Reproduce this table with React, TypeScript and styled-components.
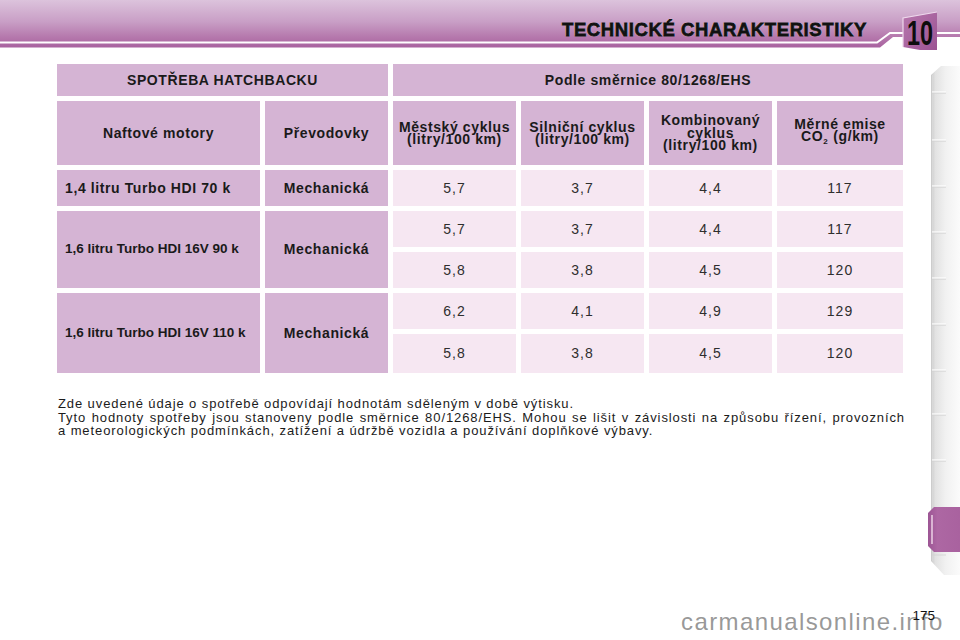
import React from "react";
import styled, { createGlobalStyle } from "styled-components";

const GlobalStyle = createGlobalStyle`
  html, body { margin: 0; padding: 0; background: #ffffff; }
  body { font-family: "Liberation Sans", Arial, sans-serif; color: #1b1b1b; }
`;

const Page = styled.div`
  position: relative;
  width: 960px;
  height: 640px;
  display: flex;
  flex-direction: column;
  overflow: hidden;
`;

const Header = styled.header`
  display: grid;
  height: 50px;
  flex: none;
  & > * { grid-area: 1 / 1; }
`;

const HeaderArt = styled.svg`
  display: block;
`;

const Title = styled.h1`
  margin: 20.5px 0 0 562px;
  align-self: start;
  justify-self: start;
  font-size: 18.5px;
  line-height: 18px;
  font-weight: bold;
  letter-spacing: 0.6px;
  color: #111;
  -webkit-text-stroke: 0.8px #111;
  text-shadow: 0 0 1px #fff, 0 0 1px #fff;
  white-space: nowrap;
`;

const Body = styled.div`
  display: flex;
  height: 525px;
  flex: none;
`;

const Content = styled.main`
  width: 846px;
  padding: 14px 0 0 57px;
  flex: none;
`;

const Table = styled.div`
  display: grid;
  grid-template-columns: 203px 123px 123px 123px 123px 126px;
  grid-template-rows: 32px 64px 36px 36px 36px 36px 39px;
  gap: 5px;
`;

const Cell = styled.div<{
  $tone: "head" | "data";
  $col: string;
  $row: string;
  $left?: boolean;
  $tight?: boolean;
  $bold?: boolean;
}>`
  grid-column: ${(p) => p.$col};
  grid-row: ${(p) => p.$row};
  background: ${(p) => (p.$tone === "head" ? "#d5b4d4" : "#f6e7f2")};
  display: flex;
  align-items: center;
  justify-content: ${(p) => (p.$left ? "flex-start" : "center")};
  text-align: ${(p) => (p.$left ? "left" : "center")};
  padding: 0 ${(p) => (p.$left ? "8px" : "2px")};
  font-size: ${(p) => (p.$tight ? "13.5px" : "14px")};
  letter-spacing: ${(p) => (p.$tight ? "0px" : p.$bold ? "0.6px" : "1px")};
  font-weight: ${(p) => (p.$bold ? "bold" : "normal")};
  line-height: 12.5px;
  color: ${(p) => (p.$bold ? "#1a1a1a" : "#2e2e2e")};
`;

const Label = styled.span`
  display: block;
  white-space: nowrap;
`;

const Sub = styled.span`
  font-size: 8px;
  vertical-align: -3px;
  letter-spacing: 0;
  margin-right: 1px;
`;

const Note = styled.div`
  margin: 24px 0 0 1px;
  width: 847px;
  font-size: 13px;
  line-height: 13.5px;
  letter-spacing: 0.9px;
  color: #1b1b1b;
`;

const NoteLine = styled.div<{ $justify?: boolean }>`
  white-space: nowrap;
  text-align: ${(p) => (p.$justify ? "justify" : "left")};
  text-align-last: ${(p) => (p.$justify ? "justify" : "left")};
`;

const Sidebar = styled.aside`
  margin: 16px 0 0 25px;
  width: 32px;
  height: 509px;
  flex: none;
`;

const SideArt = styled.svg`
  display: block;
`;

const Footer = styled.footer`
  flex: 1;
  display: flex;
  justify-content: flex-end;
  align-items: flex-start;
  padding: 33px 25px 0 0;
`;

const PageNumber = styled.span`
  position: relative;
  z-index: 1;
  font-size: 13.5px;
  line-height: 16px;
  color: #111;
`;

const Watermark = styled.div`
  position: absolute;
  left: 681px;
  top: 610px;
  font-size: 24px;
  line-height: 24px;
  letter-spacing: 1.4px;
  color: rgba(125, 125, 125, 0.8);
  white-space: nowrap;
`;

type Row = { motor: string; tight?: boolean; values: string[][] };

const rows: Row[] = [
  { motor: "1,4 litru Turbo HDI 70 k", values: [["5,7", "3,7", "4,4", "117"]] },
  {
    motor: "1,6 litru Turbo HDI 16V 90 k",
    tight: true,
    values: [
      ["5,7", "3,7", "4,4", "117"],
      ["5,8", "3,8", "4,5", "120"],
    ],
  },
  {
    motor: "1,6 litru Turbo HDI 16V 110 k",
    tight: true,
    values: [
      ["6,2", "4,1", "4,9", "129"],
      ["5,8", "3,8", "4,5", "120"],
    ],
  },
];

const ticks = [26, 74, 120, 166, 212, 258, 304, 348, 394];

export default function App() {
  let rowStart = 3;
  const bodyCells: React.ReactNode[] = [];
  rows.forEach((r, ri) => {
    const span = r.values.length;
    const rowSpan = `${rowStart} / span ${span}`;
    bodyCells.push(
      <Cell key={`m${ri}`} $tone="head" $col="1" $row={rowSpan} $left $bold $tight={r.tight}>
        <Label>{r.motor}</Label>
      </Cell>
    );
    bodyCells.push(
      <Cell key={`g${ri}`} $tone="head" $col="2" $row={rowSpan} $bold>
        <Label>Mechanická</Label>
      </Cell>
    );
    r.values.forEach((vals, vi) => {
      vals.forEach((v, ci) => {
        bodyCells.push(
          <Cell key={`v${ri}-${vi}-${ci}`} $tone="data" $col={`${ci + 3}`} $row={`${rowStart + vi}`}>
            <Label>{v}</Label>
          </Cell>
        );
      });
    });
    rowStart += span;
  });

  return (
    <Page>
      <GlobalStyle />
      <Header>
        <HeaderArt width="960" height="50" viewBox="0 0 960 50">
          <defs>
            <linearGradient id="band" x1="0" y1="0" x2="0" y2="1">
              <stop offset="0" stopColor="#dcc3dc" />
              <stop offset="0.45" stopColor="#c99fc6" />
              <stop offset="0.8" stopColor="#b476ab" />
              <stop offset="1" stopColor="#a8629f" />
            </linearGradient>
            <linearGradient id="badge" x1="0" y1="0" x2="1" y2="1">
              <stop offset="0" stopColor="#b878ae" />
              <stop offset="1" stopColor="#9a5292" />
            </linearGradient>
          </defs>
          <polygon points="0,0 960,0 960,37 893,37 880,47.5 0,47.5" fill="url(#band)" />
          <polyline points="0,42.5 877,42.5 890,33 960,33" fill="none" stroke="#ffffff" strokeWidth="2" />
          <polygon points="903,18 937,12 937,53 903,47" fill="url(#badge)" />
          <polyline points="903,47 903,18 937,12" fill="none" stroke="#eed8ec" strokeWidth="1.2" />
          <text
            x="907"
            y="45"
            fontFamily="Liberation Sans, Arial, sans-serif"
            fontWeight="bold"
            fontSize="35"
            fill="#0d0d0d"
            textLength="26"
            lengthAdjust="spacingAndGlyphs"
          >
            10
          </text>
        </HeaderArt>
        <Title>TECHNICKÉ CHARAKTERISTIKY</Title>
      </Header>

      <Body>
        <Content>
          <Table>
            <Cell $tone="head" $col="1 / 3" $row="1" $bold>
              <Label>SPOTŘEBA HATCHBACKU</Label>
            </Cell>
            <Cell $tone="head" $col="3 / 7" $row="1" $bold>
              <Label>Podle směrnice 80/1268/EHS</Label>
            </Cell>
            <Cell $tone="head" $col="1" $row="2" $bold>
              <Label>Naftové motory</Label>
            </Cell>
            <Cell $tone="head" $col="2" $row="2" $bold>
              <Label>Převodovky</Label>
            </Cell>
            <Cell $tone="head" $col="3" $row="2" $bold>
              <Label>
                Městský cyklus
                <br />
                (litry/100 km)
              </Label>
            </Cell>
            <Cell $tone="head" $col="4" $row="2" $bold>
              <Label>
                Silniční cyklus
                <br />
                (litry/100 km)
              </Label>
            </Cell>
            <Cell $tone="head" $col="5" $row="2" $bold>
              <Label>
                Kombinovaný
                <br />
                cyklus
                <br />
                (litry/100 km)
              </Label>
            </Cell>
            <Cell $tone="head" $col="6" $row="2" $bold>
              <Label>
                Měrné emise
                <br />
                CO<Sub>2</Sub> (g/km)
              </Label>
            </Cell>
            {bodyCells}
          </Table>

          <Note>
            <NoteLine>Zde uvedené údaje o spotřebě odpovídají hodnotám sděleným v době výtisku.</NoteLine>
            <NoteLine $justify>
              Tyto hodnoty spotřeby jsou stanoveny podle směrnice 80/1268/EHS. Mohou se lišit v závislosti na způsobu řízení, provozních
            </NoteLine>
            <NoteLine>a meteorologických podmínkách, zatížení a údržbě vozidla a používání doplňkové výbavy.</NoteLine>
          </Note>
        </Content>

        <Sidebar>
          <SideArt width="32" height="509" viewBox="0 0 32 509">
            <defs>
              <linearGradient id="strip" x1="0" y1="0" x2="1" y2="0">
                <stop offset="0" stopColor="#c9c9c9" />
                <stop offset="0.15" stopColor="#e2e2e2" />
                <stop offset="0.5" stopColor="#f1f1f1" />
                <stop offset="1" stopColor="#fbfbfb" />
              </linearGradient>
              <linearGradient id="tab" x1="0" y1="0" x2="1" y2="0">
                <stop offset="0" stopColor="#9c5594" />
                <stop offset="0.3" stopColor="#ad67a3" />
                <stop offset="1" stopColor="#a9629f" />
              </linearGradient>
            </defs>
            <polygon points="13,0 32,0 32,509 16,509 3,495 3,9" fill="url(#strip)" />
            <line x1="4.5" y1="9" x2="4.5" y2="495" stroke="#d8d8d8" strokeWidth="1" />
            {ticks.map((t) => (
              <g key={t}>
                <line x1="4" y1={t} x2="18" y2={t} stroke="#ffffff" strokeWidth="1.2" />
                <line x1="4" y1={t + 1.2} x2="18" y2={t + 1.2} stroke="#d2d2d2" strokeWidth="0.8" />
              </g>
            ))}
            <line x1="4" y1="489" x2="18" y2="489" stroke="#d2d2d2" strokeWidth="0.8" />
            <polygon points="6,441 32,441 32,486 6,486 0,480 0,447" fill="url(#tab)" />
            <line x1="4" y1="449" x2="4" y2="478" stroke="#ecd2e6" strokeWidth="1.5" />
          </SideArt>
        </Sidebar>
      </Body>

      <Footer>
        <PageNumber>175</PageNumber>
      </Footer>
      <Watermark>carmanualsonline.info</Watermark>
    </Page>
  );
}
